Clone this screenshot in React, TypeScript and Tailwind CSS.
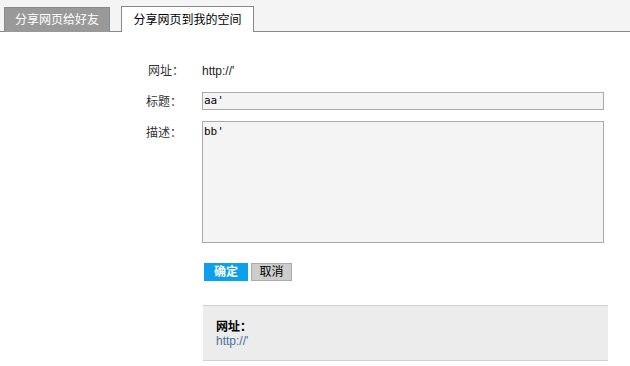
import React from "react";

export default function App() {
  const font = { fontFamily: '"Liberation Sans", "Noto Sans CJK SC", sans-serif' };
  return (
    <div className="w-[630px] h-[366px] bg-white text-[12px] text-[#333]" style={font}>
      <div className="h-[32px] bg-[#f4f4f4] border-b border-[#888] flex items-end pl-[4px] gap-[11px]">
        <div className="h-[25px] w-[106px] bg-[#999] border border-b-0 border-[#8a8a8a] text-white flex items-center justify-center text-[12px] mb-[-1px]">
          分享网页给好友
        </div>
        <div className="h-[26px] w-[133px] bg-white border border-b-0 border-[#888] text-black flex items-center justify-center text-[12px] mb-[-1px]">
          分享网页到我的空间
        </div>
      </div>

      <div className="pl-[146px] pt-[31px]">
        <div className="flex items-center h-[16px]">
          <div className="w-[56px] pl-[2px] text-[#333]">网址：</div>
          <div className="text-[#222]">http://'</div>
        </div>
        <div className="flex items-start mt-[13px]">
          <div className="w-[56px] pt-[1px]">标题：</div>
          <div className="w-[402px] h-[18px] border border-[#aaa] bg-[#f4f4f4] px-[1px] text-[11px] leading-[16px] text-black" style={{ fontFamily: '"DejaVu Sans Mono", monospace' }}>
            aa'
          </div>
        </div>
        <div className="flex items-start mt-[10px]">
          <div className="w-[56px] pt-[3px]">描述：</div>
          <div className="w-[402px] h-[122px] border border-[#aaa] bg-[#f4f4f4] px-[1px] pt-[2px] text-[11px] leading-[16px] text-black" style={{ fontFamily: '"DejaVu Sans Mono", monospace' }}>
            bb'
          </div>
        </div>
        <div className="flex gap-[3px] mt-[20px] ml-[58px]">
          <div className="w-[44px] h-[18px] bg-[#0aa0ec] text-white font-bold flex items-center justify-center">确定</div>
          <div className="w-[41px] h-[18px] bg-[#ccc] border border-[#aaa] text-black flex items-center justify-center">取消</div>
        </div>
        <div className="ml-[57px] mt-[24px] w-[405px] h-[56px] bg-[#ececec] border-t border-b border-[#d0d0d0] pl-[13px] pt-[14px]">
          <div className="font-bold text-black leading-[14px]">网址：</div>
          <div className="text-[#4a6fa0] leading-[14px]">http://'</div>
        </div>
      </div>
    </div>
  );
}
